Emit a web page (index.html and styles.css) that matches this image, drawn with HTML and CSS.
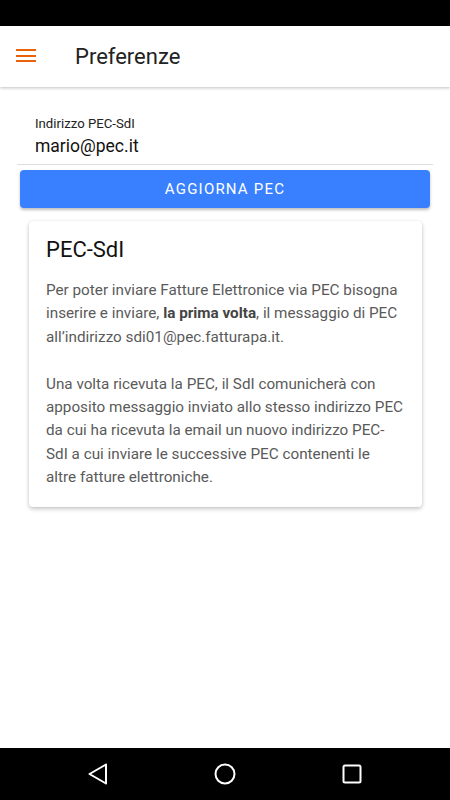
FILE: index.html
```html
<!DOCTYPE html>
<html>
<head>
    <meta charset="utf-8">
    <meta name="viewport" content="width=device-width, initial-scale=1.0">
    <link rel="stylesheet" href="styles.css">
</head>
<body>
    <div class="statusBar"></div>

    <!-- header -->
    <div class="toolbar">
        <div class="menuBtn">
            <span></span><span></span><span></span>
        </div>
        <div class="toolbarTitle">Preferenze</div>
    </div>

    <div class="content">
        <!-- campo PEC -->
        <div class="field">
            <label class="fieldLabel">Indirizzo PEC-SdI</label>
            <div class="fieldValue">mario@pec.it</div>
        </div>

        <div class="btnPrimary">AGGIORNA PEC</div>

        <!-- info card -->
        <div class="card">
            <div class="cardTitle">PEC-SdI</div>
            <p class="cardText">Per poter inviare Fatture Elettronice via PEC bisogna inserire e inviare, <b>la prima volta</b>, il messaggio di PEC all’indirizzo sdi01@pec.fatturapa.it.</p>
            <p class="cardText">Una volta ricevuta la PEC, il SdI comunicherà con apposito messaggio inviato allo stesso indirizzo PEC da cui ha ricevuta la email un nuovo indirizzo PEC-SdI a cui inviare le successive PEC contenenti le<br>altre fatture elettroniche.</p>
        </div>
    </div>

    <div class="navBar">
        <div class="navBtn">
            <svg width="20" height="22" viewBox="0 0 20 22"><path d="M18 1.5 L1.5 11 L18 20.5 Z" fill="none" stroke="white" stroke-width="2" stroke-linejoin="round"/></svg>
        </div>
        <div class="navBtn">
            <svg width="22" height="22" viewBox="0 0 22 22"><circle cx="11" cy="11" r="9.5" fill="none" stroke="white" stroke-width="2"/></svg>
        </div>
        <div class="navBtn">
            <svg width="20" height="20" viewBox="0 0 20 20"><rect x="1.5" y="1.5" width="17" height="17" rx="1.5" fill="none" stroke="white" stroke-width="2"/></svg>
        </div>
    </div>
</body>
</html>
```

FILE: styles.css
```css
body {
    margin: 0;
    width: 450px;
    height: 800px;
    display: flex;
    flex-direction: column;
    font-family: Roboto, "Liberation Sans", sans-serif;
    background-color: white;
    overflow: hidden;
}

.statusBar {
    height: 26px;
    background-color: black;
    flex-shrink: 0;
}

.toolbar {
    height: 61px;
    display: flex;
    align-items: center;
    background-color: white;
    box-shadow: 0 1px 3px rgba(0,0,0,0.25);
    position: relative;
    z-index: 1;
    flex-shrink: 0;
}

.menuBtn {
    width: 20px;
    margin-left: 16px;
    margin-top: -2px;
    display: flex;
    flex-direction: column;
    gap: 3.5px;
}

.menuBtn span {
    display: block;
    height: 2px;
    background-color: #e8630a;
}

.toolbarTitle {
    margin-left: 39px;
    font-size: 22px;
    color: #222;
}

.content {
    flex: 1;
    padding: 0 17px;
}

.field {
    margin-top: 29px;
    padding: 0 18px 7px;
    border-bottom: 1px solid #dedede;
}

.fieldLabel {
    display: block;
    font-size: 13.2px;
    color: #222;
}

.fieldValue {
    font-size: 17.5px;
    color: #111;
    margin-top: 4px;
    line-height: 22px;
}

.btnPrimary {
    margin: 5px 3px 0;
    height: 38px;
    border-radius: 4px;
    background-color: #3880ff;
    color: white;
    font-size: 15px;
    letter-spacing: 1.2px;
    display: flex;
    align-items: center;
    justify-content: center;
    box-shadow: 0 2px 3px rgba(0,0,0,0.25);
}

.card {
    margin: 13px 11px 0 12px;
    padding: 16px 17px 18px;
    border-radius: 4px;
    box-shadow: 0 2px 4px rgba(0,0,0,0.22), 0 0 2px rgba(0,0,0,0.08);
}

.cardTitle {
    font-size: 22px;
    color: #111;
    line-height: 26px;
}

.cardText {
    font-size: 15.25px;
    line-height: 23.3px;
    color: #5a5a5a;
    margin: 16px 0 0;
}

.cardText + .cardText {
    margin-top: 24px;
}

.cardText b {
    color: #444;
}

.navBar {
    height: 52px;
    background-color: black;
    display: flex;
    align-items: center;
    justify-content: center;
    gap: 87px;
    flex-shrink: 0;
}

.navBtn {
    width: 40px;
    display: flex;
    justify-content: center;
}
```
